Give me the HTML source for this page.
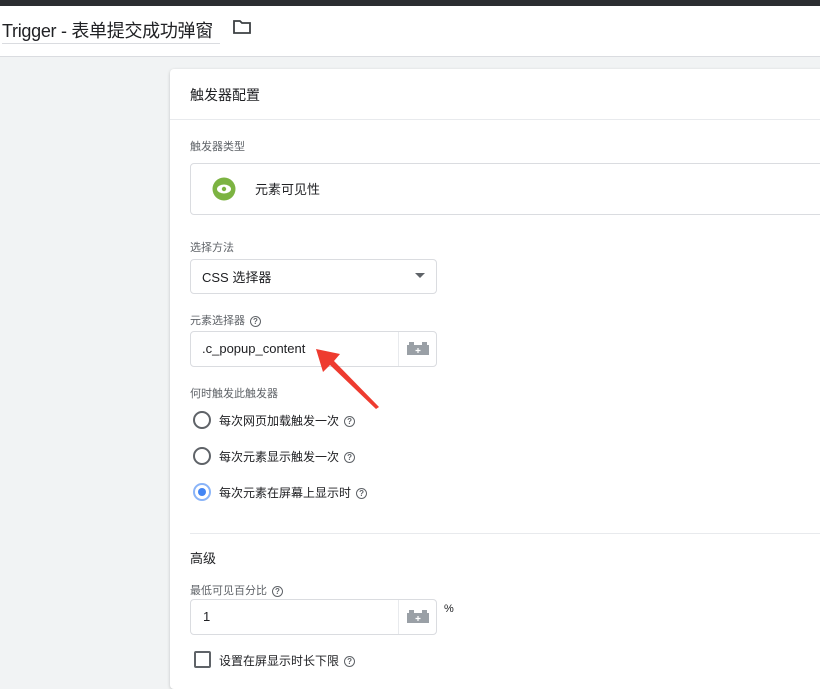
<!DOCTYPE html>
<html><head><meta charset="utf-8"><style>
*{box-sizing:border-box;margin:0;padding:0}
body{width:820px;height:672px;overflow:hidden;background:#f1f3f4;font-family:"Liberation Sans","Noto Sans CJK SC",sans-serif;color:#202124;position:relative}
.abs{position:absolute}
.top{left:0;top:0;width:820px;height:6px;background:#2b2d31}
.hdr{left:0;top:6px;width:820px;height:51px;background:#fff;border-bottom:1px solid #dadce0}
.card{left:170px;top:69px;width:660px;height:620px;background:#fff;border-radius:4px;box-shadow:0 1px 3px rgba(0,0,0,.2)}
.lbl{font-size:11px;color:#5f6368}
.box{border:1px solid #dadce0;border-radius:4px;background:#fff}
.t13{font-size:13px}
.q{display:inline-block;width:11px;height:11px;border:1.3px solid #5f6368;border-radius:50%;font-size:8px;line-height:9px;text-align:center;color:#5f6368;font-weight:bold;vertical-align:middle;margin-left:5px}
.radio{width:18px;height:18px;border:2px solid #5f6368;border-radius:50%}
</style></head><body>
<div class="abs top"></div>
<div class="abs hdr"></div>
<div class="abs" style="left:2px;top:17px;font-size:18px;color:#202124;letter-spacing:-0.3px">Trigger - 表单提交成功弹窗</div>
<div class="abs" style="left:2px;top:43px;width:218px;height:1px;background:#dadce0"></div>
<svg class="abs" style="left:232px;top:18px" width="20" height="18" viewBox="0 0 20 18"><path d="M2 3h6l2 2h8v10H2z" fill="none" stroke="#3c4043" stroke-width="1.8"/></svg>
<div class="abs card"></div>
<div class="abs" style="left:190px;top:85px;font-size:14px">触发器配置</div>
<div class="abs" style="left:170px;top:119px;width:650px;height:1px;background:#e8eaed"></div>
<div class="abs lbl" style="left:190px;top:138px">触发器类型</div>
<div class="abs box" style="left:190px;top:163px;width:640px;height:52px"></div>
<svg class="abs" style="left:212px;top:177px" width="24" height="24" viewBox="0 0 24 24"><circle cx="12" cy="12" r="11.5" fill="#7cb342"/><ellipse cx="12" cy="12" rx="7" ry="4.5" fill="#fff"/><circle cx="12" cy="12" r="2.2" fill="#7cb342"/></svg>
<div class="abs t13" style="left:255px;top:179px">元素可见性</div>
<div class="abs lbl" style="left:190px;top:239px">选择方法</div>
<div class="abs box" style="left:190px;top:259px;width:247px;height:35px"></div>
<div class="abs t13" style="left:202px;top:267px">CSS 选择器</div>
<div class="abs" style="left:415px;top:273px;width:0;height:0;border-left:5px solid transparent;border-right:5px solid transparent;border-top:5px solid #5f6368"></div>
<div class="abs lbl" style="left:190px;top:312px">元素选择器<span class="q">?</span></div>
<div class="abs box" style="left:190px;top:331px;width:247px;height:36px"></div>
<div class="abs" style="left:398px;top:332px;width:1px;height:34px;background:#e8eaed"></div>
<div class="abs t13" style="left:202px;top:341px">.c_popup_content</div>
<svg class="abs" style="left:406px;top:342px" width="24" height="14" viewBox="0 0 24 14"><rect x="1" y="3" width="22" height="10" fill="#9aa0a6"/><rect x="3" y="0" width="5" height="4" fill="#9aa0a6"/><rect x="16" y="0" width="5" height="4" fill="#9aa0a6"/><path d="M12 6v5M9.5 8.5h5" stroke="#fff" stroke-width="1.2"/></svg>
<div class="abs lbl" style="left:190px;top:385px">何时触发此触发器</div>
<div class="abs radio" style="left:193px;top:411px"></div>
<div class="abs" style="left:219px;top:412px;font-size:12px">每次网页加载触发一次<span class="q">?</span></div>
<div class="abs radio" style="left:193px;top:447px"></div>
<div class="abs" style="left:219px;top:448px;font-size:12px">每次元素显示触发一次<span class="q">?</span></div>
<div class="abs radio" style="left:193px;top:483px;border-color:#8ab4f8"></div>
<div class="abs" style="left:198px;top:488px;width:8px;height:8px;border-radius:50%;background:#4285f4"></div>
<div class="abs" style="left:219px;top:484px;font-size:12px">每次元素在屏幕上显示时<span class="q">?</span></div>
<div class="abs" style="left:190px;top:533px;width:630px;height:1px;background:#e8eaed"></div>
<div class="abs t13" style="left:190px;top:548px">高级</div>
<div class="abs lbl" style="left:190px;top:582px">最低可见百分比<span class="q">?</span></div>
<div class="abs box" style="left:190px;top:599px;width:247px;height:36px"></div>
<div class="abs" style="left:398px;top:600px;width:1px;height:34px;background:#e8eaed"></div>
<div class="abs t13" style="left:203px;top:609px">1</div>
<svg class="abs" style="left:406px;top:610px" width="24" height="14" viewBox="0 0 24 14"><rect x="1" y="3" width="22" height="10" fill="#9aa0a6"/><rect x="3" y="0" width="5" height="4" fill="#9aa0a6"/><rect x="16" y="0" width="5" height="4" fill="#9aa0a6"/><path d="M12 6v5M9.5 8.5h5" stroke="#fff" stroke-width="1.2"/></svg>
<div class="abs" style="left:444px;top:603px;font-size:11px">%</div>
<div class="abs" style="left:194px;top:651px;width:17px;height:17px;border:2px solid #5f6368;border-radius:2px"></div>
<div class="abs" style="left:219px;top:652px;font-size:12px">设置在屏显示时长下限<span class="q">?</span></div>
<svg class="abs" style="left:0;top:0" width="820" height="672"><path d="M316 349 L340 354 L334 361 L379 407 L376 409 L330 365 L323 372 Z" fill="#ee3b2f"/></svg>
</body></html>
